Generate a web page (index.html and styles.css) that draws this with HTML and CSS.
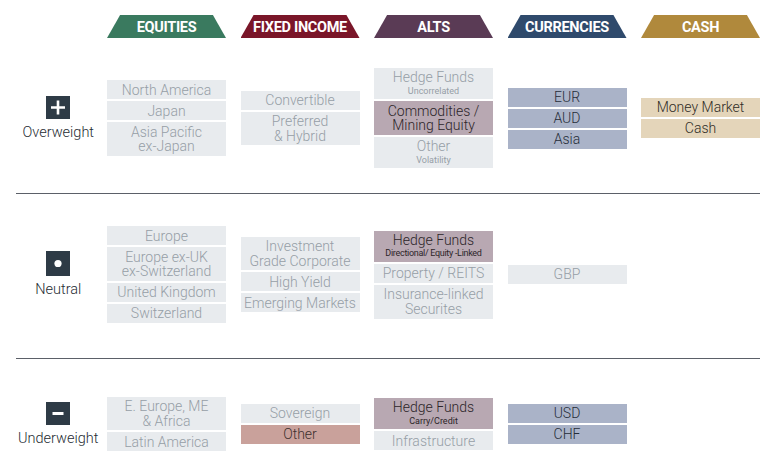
FILE: index.html
```html
<!DOCTYPE html>
<html lang="en">
<head>
<meta charset="utf-8">
<title>Asset allocation views</title>
<link rel="stylesheet" href="styles.css">
</head>
<body>
<div class="board">
  <div class="grid head-row">
    <div></div>
    <div class="tab tab-eq">EQUITIES</div>
    <div class="tab tab-fi">FIXED INCOME</div>
    <div class="tab tab-alts">ALTS</div>
    <div class="tab tab-cur">CURRENCIES</div>
    <div class="tab tab-cash">CASH</div>
  </div>

  <div class="grid row row-over">
    <div class="label">
      <div class="icon"><svg width="24" height="23" viewBox="0 0 24 23"><rect width="24" height="23" fill="#2e3b46"/><path d="M5 11.5h14M12 4.5v14" stroke="#fff" stroke-width="2.6"/></svg></div>
      <div class="label-text">Overweight</div>
    </div>
    <div class="stack">
      <div class="cell">North America</div>
      <div class="cell">Japan</div>
      <div class="cell">Asia Pacific<br>ex-Japan</div>
    </div>
    <div class="stack">
      <div class="cell">Convertible</div>
      <div class="cell">Preferred<br>&amp; Hybrid</div>
    </div>
    <div class="stack">
      <div class="cell">Hedge Funds<span class="sub">Uncorrelated</span></div>
      <div class="cell mauve">Commodities /<br>Mining Equity</div>
      <div class="cell">Other<span class="sub">Volatility</span></div>
    </div>
    <div class="stack">
      <div class="cell blue">EUR</div>
      <div class="cell blue">AUD</div>
      <div class="cell blue">Asia</div>
    </div>
    <div class="stack">
      <div class="cell sand">Money Market</div>
      <div class="cell sand">Cash</div>
    </div>
  </div>

  <div class="rule"></div>

  <div class="grid row row-neutral">
    <div class="label">
      <div class="icon"><svg width="24" height="25" viewBox="0 0 24 25"><rect width="24" height="25" fill="#2e3b46"/><circle cx="12" cy="12.5" r="3.6" fill="#fff"/></svg></div>
      <div class="label-text">Neutral</div>
    </div>
    <div class="stack">
      <div class="cell">Europe</div>
      <div class="cell">Europe ex-UK<br>ex-Switzerland</div>
      <div class="cell">United Kingdom</div>
      <div class="cell">Switzerland</div>
    </div>
    <div class="stack">
      <div class="cell">Investment<br>Grade Corporate</div>
      <div class="cell">High Yield</div>
      <div class="cell">Emerging Markets</div>
    </div>
    <div class="stack">
      <div class="cell mauve">Hedge Funds<span class="sub sub-tight">Directional/ Equity -Linked</span></div>
      <div class="cell">Property / REITS</div>
      <div class="cell">Insurance-linked<br>Securites</div>
    </div>
    <div class="stack">
      <div class="cell">GBP</div>
    </div>
    <div></div>
  </div>

  <div class="rule"></div>

  <div class="grid row row-under">
    <div class="label">
      <div class="icon"><svg width="24" height="23" viewBox="0 0 24 23"><rect width="24" height="23" fill="#2e3b46"/><path d="M6.5 11.5h11" stroke="#fff" stroke-width="3"/></svg></div>
      <div class="label-text">Underweight</div>
    </div>
    <div class="stack">
      <div class="cell">E. Europe, ME<br>&amp; Africa</div>
      <div class="cell">Latin America</div>
    </div>
    <div class="stack">
      <div class="cell">Sovereign</div>
      <div class="cell rose">Other</div>
    </div>
    <div class="stack">
      <div class="cell mauve">Hedge Funds<span class="sub">Carry/Credit</span></div>
      <div class="cell">Infrastructure</div>
    </div>
    <div class="stack">
      <div class="cell blue">USD</div>
      <div class="cell blue">CHF</div>
    </div>
    <div></div>
  </div>
</div>
</body>
</html>
```

FILE: styles.css
```css
html, body {
  margin: 0;
  padding: 0;
  background: #ffffff;
  overflow: hidden;
}

body {
  font-family: Roboto, "Liberation Sans", sans-serif;
  color: #333;
}

.board {
  width: 744px;
  padding: 15px 0 0 16px;
}

.grid {
  display: grid;
  grid-template-columns: 76.5px repeat(5, 119px);
  column-gap: 14.5px;
  align-items: center;
}

.head-row {
  height: 23px;
  margin-bottom: 5px;
  align-items: stretch;
}

.tab {
  clip-path: polygon(11% 0, 89% 0, 100% 100%, 0 100%);
  color: #fff;
  font-weight: 700;
  font-size: 14.5px;
  letter-spacing: -0.3px;
  display: flex;
  align-items: center;
  justify-content: center;
  padding-top: 1px;
  box-sizing: border-box;
}

.tab-eq { background: #3a7a5f; }
.tab-fi { background: #7a1629; }
.tab-alts { background: #5a3b55; }
.tab-cur { background: #2f4a6c; }
.tab-cash { background: #b0893c; }

.row {
  box-sizing: border-box;
}

.row-over { height: 150px; }
.row-neutral { height: 164px; padding-bottom: 3px; }
.row-under { height: 130px; }

.rule {
  height: 1px;
  background: #5b6068;
}

.label {
  display: flex;
  flex-direction: column;
  align-items: center;
  padding-left: 8px;
  gap: 5px;
}

.icon {
  display: flex;
}

.label-text {
  font-size: 14.5px;
  line-height: 17px;
  font-weight: 300;
  color: #262c33;
  white-space: nowrap;
}

.stack {
  display: flex;
  flex-direction: column;
  gap: 2px;
}

.cell {
  background: #e8ebee;
  color: #969ea6;
  text-align: center;
  font-weight: 300;
  font-size: 14px;
  line-height: 14.5px;
  padding: 2.25px 2px;
  white-space: nowrap;
}

.sub {
  display: block;
  font-size: 9px;
  line-height: 12.5px;
  font-weight: 400;
}

.sub-tight {
  letter-spacing: -0.3px;
}

.mauve {
  background: #b8a8b2;
  color: #2c2529;
}

.blue {
  background: #aab3c8;
  color: #262d38;
}

.sand {
  background: #e4d5ba;
  color: #2f2c26;
}

.rose {
  background: #c9a19b;
  color: #3d302e;
}
```
